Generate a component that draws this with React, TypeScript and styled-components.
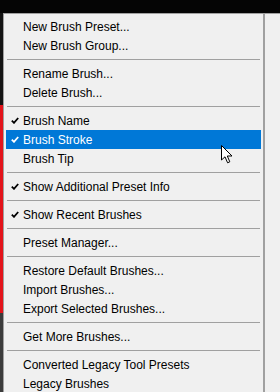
import * as React from "react";
import styled, { createGlobalStyle } from "styled-components";

const GlobalStyle = createGlobalStyle`
  html, body {
    margin: 0;
    padding: 0;
    background: #000;
  }
  body {
    font-family: "Liberation Sans", Arial, sans-serif;
  }
`;

const Page = styled.div`
  width: 280px;
  height: 392px;
  display: flex;
  flex-direction: column;
  overflow: hidden;
  position: relative;
`;

const TopBar = styled.div`
  height: 13px;
  background: #050505;
  flex: none;
`;

const Body = styled.div`
  flex: 1;
  display: flex;
  min-height: 0;
`;

const LeftStrip = styled.div`
  width: 3px;
  display: flex;
  flex-direction: column;
  flex: none;
`;

const StripPart = styled.div<{ $color: string; $h?: number }>`
  background: ${(p) => p.$color};
  ${(p) => (p.$h ? `height: ${p.$h}px;` : "flex: 1;")}
`;

const Panel = styled.div`
  flex: 1;
  display: flex;
  background: #f0f0f0;
  border-top: 1px solid #a0a0a0;
  border-left: 1px solid #a0a0a0;
`;

const Menu = styled.ul`
  list-style: none;
  margin: 0;
  padding: 3px 0 0 2px;
  width: 255px;
  flex: none;
`;

const Item = styled.li<{ $active?: boolean }>`
  height: 19px;
  display: flex;
  align-items: center;
  font-size: 12px;
  color: ${(p) => (p.$active ? "#fff" : "#000")};
  background: ${(p) => (p.$active ? "#0078d7" : "transparent")};
  white-space: nowrap;
`;

const CheckCell = styled.span`
  width: 17px;
  display: flex;
  justify-content: center;
  align-items: center;
  flex: none;
`;

const Separator = styled.li`
  height: 9px;
  display: flex;
  align-items: center;
  padding: 0 1px;

  &::after {
    content: "";
    flex: 1;
    height: 1px;
    background: #a0a0a0;
  }
`;

const VLine = styled.div`
  width: 2px;
  margin-left: 2px;
  background: #a0a0a0;
  flex: none;
`;

const Cursor = styled.svg`
  position: absolute;
  left: 221px;
  top: 145px;
`;

type Entry = { label: string; checked?: boolean; active?: boolean } | "sep";

const entries: Entry[] = [
  { label: "New Brush Preset..." },
  { label: "New Brush Group..." },
  "sep",
  { label: "Rename Brush..." },
  { label: "Delete Brush..." },
  "sep",
  { label: "Brush Name", checked: true },
  { label: "Brush Stroke", checked: true, active: true },
  { label: "Brush Tip" },
  "sep",
  { label: "Show Additional Preset Info", checked: true },
  "sep",
  { label: "Show Recent Brushes", checked: true },
  "sep",
  { label: "Preset Manager..." },
  "sep",
  { label: "Restore Default Brushes..." },
  { label: "Import Brushes..." },
  { label: "Export Selected Brushes..." },
  "sep",
  { label: "Get More Brushes..." },
  "sep",
  { label: "Converted Legacy Tool Presets" },
  { label: "Legacy Brushes" },
];

function Check({ color }: { color: string }) {
  return (
    <svg width="8" height="7" viewBox="0 0 8 7">
      <path d="M0.8 3.6 L3 5.8 L7.2 1" fill="none" stroke={color} strokeWidth="1.8" />
    </svg>
  );
}

export default function App() {
  return (
    <Page>
      <GlobalStyle />
      <TopBar />
      <Body>
        <LeftStrip>
          <StripPart $color="#141414" $h={92} />
          <StripPart $color="#e3141b" $h={208} />
          <StripPart $color="#3c3c3c" />
        </LeftStrip>
        <Panel>
          <Menu>
            {entries.map((e, i) =>
              e === "sep" ? (
                <Separator key={i} />
              ) : (
                <Item key={i} $active={e.active}>
                  <CheckCell>{e.checked && <Check color={e.active ? "#fff" : "#000"} />}</CheckCell>
                  {e.label}
                </Item>
              )
            )}
          </Menu>
          <VLine />
        </Panel>
      </Body>
      <Cursor width="14" height="20" viewBox="0 0 14 20">
        <path d="M0.5 0.5 L0.5 15 L4 11.8 L6.6 17.8 L8.8 16.8 L6.3 11 L11 11 Z" fill="#fff" stroke="#000" strokeWidth="1" />
      </Cursor>
    </Page>
  );
}
